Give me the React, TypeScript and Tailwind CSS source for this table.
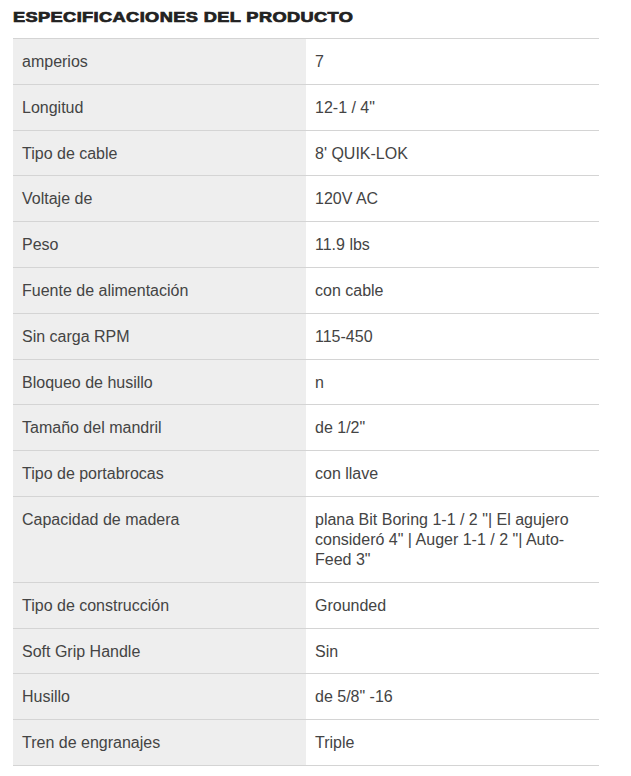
import React from "react";

const rows: [string, string][] = [
  ["amperios", "7"],
  ["Longitud", "12-1 / 4\""],
  ["Tipo de cable", "8' QUIK-LOK"],
  ["Voltaje de", "120V AC"],
  ["Peso", "11.9 lbs"],
  ["Fuente de alimentación", "con cable"],
  ["Sin carga RPM", "115-450"],
  ["Bloqueo de husillo", "n"],
  ["Tamaño del mandril", "de 1/2\""],
  ["Tipo de portabrocas", "con llave"],
  [
    "Capacidad de madera",
    "plana Bit Boring 1-1 / 2 \"| El agujero consideró 4\" | Auger 1-1 / 2 \"| Auto-Feed 3\"",
  ],
  ["Tipo de construcción", "Grounded"],
  ["Soft Grip Handle", "Sin"],
  ["Husillo", "de 5/8\" -16"],
  ["Tren de engranajes", "Triple"],
];

export default function App() {
  return (
    <div className="w-[631px] h-[776px] bg-white pl-[13px] pt-[9px] font-['Liberation_Sans',Arial,sans-serif]">
      <h2 className="text-[14px] leading-[17px] font-bold text-[#222] uppercase origin-left scale-x-[1.3] tracking-[0.3px] [-webkit-text-stroke:0.7px_#222] w-max">
        Especificaciones del producto
      </h2>
      <div className="mt-[12px] w-[586px] border-b border-[#d4d4d4]">
        {rows.map(([k, v]) => (
          <div key={k} className="flex border-t border-[#d4d4d4] text-[16px] leading-[20px] text-[#444]">
            <div className="w-[293px] shrink-0 bg-[#eeeeee] pl-[9px] pr-2 pt-[13px] pb-[11.8px]">{k}</div>
            <div className="flex-1 pl-[9px] pr-[22px] pt-[13px] pb-[11.8px]">{v}</div>
          </div>
        ))}
      </div>
    </div>
  );
}
